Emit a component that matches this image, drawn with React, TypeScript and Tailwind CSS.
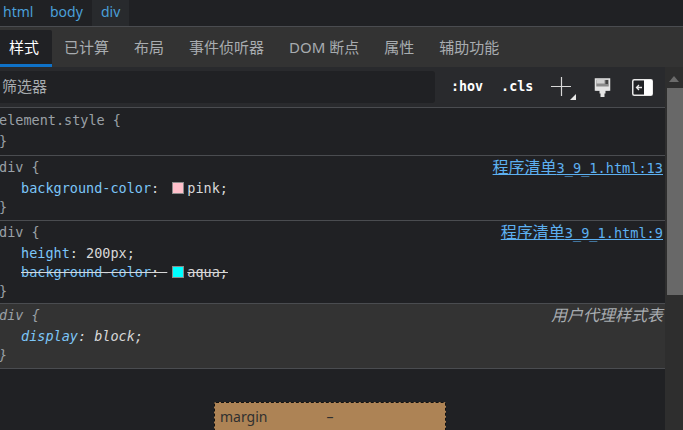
const sans = { fontFamily: '"Noto Sans", "Noto Sans CJK SC", sans-serif' };

const tabs = ['已计算', '布局', '事件侦听器', 'DOM 断点', '属性', '辅助功能'];

function Row({ children, first, className }: { children: React.ReactNode; first?: boolean; className?: string }) {
  return <div className={`${first ? 'h-[21px]' : 'h-[19px]'} ${className ?? ''}`}>{children}</div>;
}

function Punct({ children, first }: { children: React.ReactNode; first?: boolean }) {
  return <Row first={first} className="text-[#9aa0a6]">{children}</Row>;
}

function Cjk({ children }: { children: React.ReactNode }) {
  return <span className="text-[16px]" style={{ fontFamily: '"Noto Sans CJK SC", sans-serif' }}>{children}</span>;
}

function Source({ children }: { children: React.ReactNode }) {
  return <a className="absolute right-[2px] top-0 underline text-[13.6px] text-[#5db0f0]">{children}</a>;
}

function Swatch({ color }: { color: string }) {
  return <span className="inline-block w-[12px] h-[12px] ml-[5px] mr-[3px] align-[-1px] border border-[#8a8a8a]" style={{ backgroundColor: color }} />;
}

export default function App() {
  return (
    <div className="w-[683px] h-[430px] overflow-hidden bg-[#202124] flex flex-col" style={sans}>
      {/* Breadcrumbs */}
      <div className="h-[26px] flex shrink-0 text-[14px] text-[#4a9fd8] leading-[24px]">
        <span className="w-[50px] pl-[3px]">html</span>
        <span className="w-[42px]">body</span>
        <span className="w-[37px] pl-[9px] bg-[#282a2d]">div</span>
      </div>

      {/* Tabs */}
      <div className="h-[41px] shrink-0 flex bg-[#333333] border-t border-[#4a4c50] pt-[3px] text-[15px] text-[#a8acb0] leading-[34px]">
        <div className="w-[52px] h-[37px] rounded-tr-[2px] bg-[#202124] border-b-[3px] border-[#0f72c8] pl-[9px] text-white">样式</div>
        <div className="flex gap-[25px] pl-[12px]">
          {tabs.map((tab) => (
            <span key={tab}>{tab}</span>
          ))}
        </div>
      </div>

      <div className="flex-1 flex min-h-0">
        <div className="flex-1 min-w-0">
          {/* Filter */}
          <div className="h-[41px] flex items-center bg-[#292a2d] border-b border-[#4a4c50]">
            <div className="w-[435px] h-[32px] rounded-r-[3px] bg-[#202124] pl-[2px] text-[15px] leading-[31px] text-[#a8acb0]">筛选器</div>
            <div className="flex items-center text-[13.33px] font-bold text-white" style={{ fontFamily: '"DejaVu Sans Mono", monospace' }}>
              <span className="ml-[16px]">:hov</span>
              <span className="ml-[18px]">.cls</span>
            </div>
            <svg className="ml-[18px]" width="26" height="26" viewBox="0 0 26 26" fill="none">
              <path d="M0 12.500h20M10.500 3v19" stroke="#d8d8d8" strokeWidth="1.200" />
              <path d="M25 20v6h-6z" fill="#e8e8e8" />
            </svg>
            <svg className="ml-[17px]" width="17" height="19" viewBox="0 0 17 19" fill="none">
              <path d="M1.500 1h14v11h-14z" fill="#8a8a8a" stroke="#e4e4e4" strokeWidth="1.500" />
              <path d="M2.500 2h8v3.500h-8z" fill="#d0d0d0" />
              <path d="M11.500 2H14v4h-2.500z" fill="#444444" />
              <path d="M1.500 8.500h14v4h-14zM5.500 12h6v3.500h-1V19h-4v-3.500h-1z" fill="#e4e4e4" />
            </svg>
            <svg className="ml-[21px]" width="21" height="17" viewBox="0 0 21 17" fill="none">
              <rect x="0.750" y="0.750" width="19.500" height="15.500" rx="1.500" fill="#202124" stroke="#e8e8e8" strokeWidth="1.500" />
              <rect x="12" y="1" width="8" height="15" fill="#ffffff" />
              <path d="M10 8.500H4.500M7 6 4.500 8.500 7 11" stroke="#e8e8e8" strokeWidth="1.300" />
            </svg>
          </div>

          {/* Style rules */}
          <div className="ml-[-1px] text-[13.5px] leading-[20px] text-[#d8d8d8]" style={{ fontFamily: '"DejaVu Sans Mono", "Noto Sans CJK SC", monospace' }}>
            <section className="h-[48px] pt-[2px] border-b border-[#4a4c50]">
              <div className="h-[21px] text-[#9aa0a6]">element.style {'{'}</div>
              <div className="text-[#9aa0a6]">{'}'}</div>
            </section>

            <section className="h-[65px] pt-[1px] border-b border-[#4a4c50] relative">
              <Punct first>div {'{'}</Punct>
              <Row className="pl-[22px]">
                <span className="text-[#7cc6f8]">background-color</span>: <Swatch color="#ffc0cb" />pink;
              </Row>
              <Punct>{'}'}</Punct>
              <Source><Cjk>程序清单</Cjk>3_9_1.html:13</Source>
            </section>

            <section className="h-[83px] pt-[1px] border-b border-[#4a4c50] relative">
              <Punct first>div {'{'}</Punct>
              <Row className="pl-[22px]">
                <span className="text-[#7cc6f8]">height</span>: 200px;
              </Row>
              <Row className="pl-[22px] line-through">
                <span className="text-[#7cc6f8]">background-color</span>: <Swatch color="#00ffff" />aqua;
              </Row>
              <Punct>{'}'}</Punct>
              <Source><Cjk>程序清单</Cjk>3_9_1.html:9</Source>
            </section>

            <section className="h-[65px] pt-[1px] border-b border-[#4a4c50] bg-[#333333] italic relative">
              <Punct first>div {'{'}</Punct>
              <Row className="pl-[22px]">
                <span className="text-[#7cc6f8]">display</span>: block;
              </Row>
              <Punct>{'}'}</Punct>
              <div className="absolute right-[2px] top-0 text-[#a8acb0]"><Cjk>用户代理样式表</Cjk></div>
            </section>
          </div>

          {/* Box model */}
          <div className="pl-[214px] pt-[33px]">
            <div className="w-[232px] h-[60px] bg-[#ad8355] border border-dashed border-[#111111] rounded-[2px] flex text-[14px] leading-[28px] text-[#303030]">
              <span className="pl-[5px]">margin</span>
              <span className="ml-[59px]">–</span>
            </div>
          </div>
        </div>

        {/* Scrollbar */}
        <div className="w-[18px] shrink-0 bg-[#2e2e2e] flex flex-col items-center">
          <svg className="mt-[8px]" width="12" height="8" viewBox="0 0 12 8">
            <path d="M6 1l5 6H1z" fill="#6b6b6b" />
          </svg>
          <div className="mt-[5px] ml-[2px] w-[16px] h-[207px] bg-[#686868]" />
        </div>
      </div>
    </div>
  );
}
